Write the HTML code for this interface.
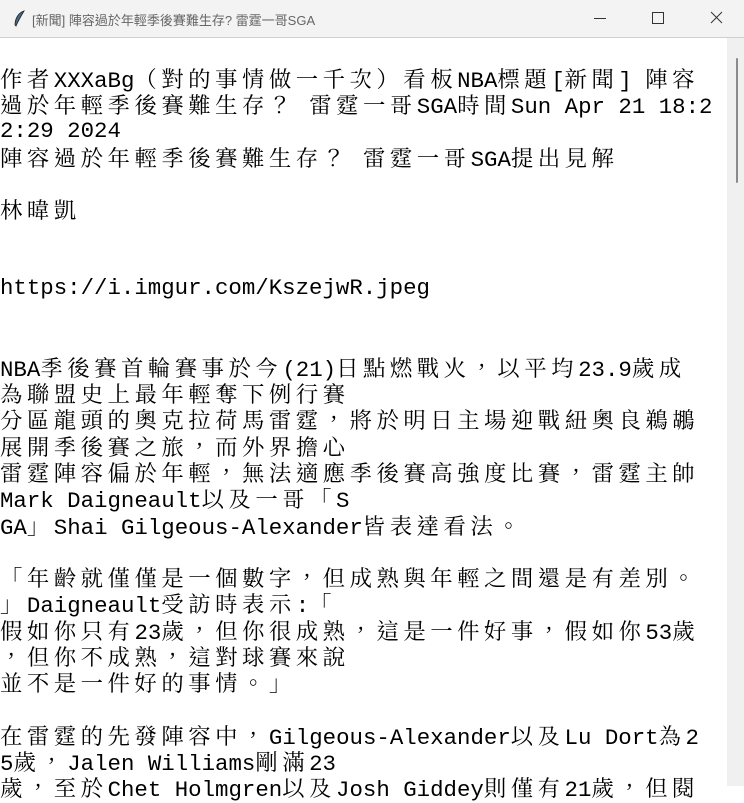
<!DOCTYPE html>
<html><head><meta charset="utf-8"><style>
html,body{margin:0;padding:0;width:744px;height:786px;overflow:hidden;background:#fff}
.tb{position:absolute;left:0;top:0;width:744px;height:37px;background:#f3f3f3;border-bottom:1px solid #cfcfcf;font-family:"Liberation Sans","Noto Sans CJK TC",sans-serif;font-size:13px;color:#666}
.tb .t{position:absolute;left:32px;top:10px}
.tb .ic{position:absolute;left:12px;top:10px}
.sb{position:absolute;left:727px;top:38px;width:17px;height:748px;background:#f0f0f0}
.th{position:absolute;left:736px;top:58px;width:2px;height:125px;background:#8a8a8a;border-radius:1px}
.txt{position:absolute;left:0;top:65px;width:727px;font-family:"Liberation Mono",monospace;font-size:22.4px;line-height:26.28px;color:#000}
.txt div{height:26.28px;white-space:pre}
i{font-style:normal;letter-spacing:4.5px;font-family:"Noto Serif CJK TC","Noto Serif CJK SC",serif}
</style></head><body>
<div class="tb">
<svg class="ic" width="14" height="18" viewBox="0 0 14 18"><path d="M12 1 C6 3 3 9 3 15 L4 16 C6 11 9 6 12 1Z" fill="#4a6a8a" stroke="#222" stroke-width="0.8"/></svg>
<span class="t">[新聞] 陣容過於年輕季後賽難生存? 雷霆一哥SGA</span>
<svg style="position:absolute;left:0;top:0" width="744" height="37" viewBox="0 0 744 37">
<line x1="594" y1="18.5" x2="606" y2="18.5" stroke="#333" stroke-width="1"/>
<rect x="652.5" y="12.5" width="11" height="11" fill="none" stroke="#333"/>
<path d="M711 12 L722 23 M722 12 L711 23" stroke="#333" stroke-width="1"/>
</svg>
</div>
<div class="sb"></div><div class="th"></div>
<div class="txt"><div><i>作者</i>XXXaBg<i>（對的事情做一千次）看板</i>NBA<i>標題</i>[<i>新聞</i>] <i>陣容</i></div><div><i>過於年輕季後賽難生存？</i> <i>雷霆一哥</i>SGA<i>時間</i>Sun Apr 21 18:2</div><div>2:29 2024</div><div><i>陣容過於年輕季後賽難生存？</i> <i>雷霆一哥</i>SGA<i>提出見解</i></div><div></div><div><i>林暐凱</i></div><div></div><div></div><div>https://i.imgur.com/KszejwR.jpeg</div><div></div><div></div><div>NBA<i>季後賽首輪賽事於今</i>(21)<i>日點燃戰火，以平均</i>23.9<i>歲成</i></div><div><i>為聯盟史上最年輕奪下例行賽</i></div><div><i>分區龍頭的奧克拉荷馬雷霆，將於明日主場迎戰紐奧良鵜鶘</i></div><div><i>展開季後賽之旅，而外界擔心</i></div><div><i>雷霆陣容偏於年輕，無法適應季後賽高強度比賽，雷霆主帥</i></div><div>Mark Daigneault<i>以及一哥「</i>S</div><div>GA<i>」</i>Shai Gilgeous-Alexander<i>皆表達看法。</i></div><div></div><div><i>「年齡就僅僅是一個數字，但成熟與年輕之間還是有差別。</i></div><div><i>」</i>Daigneault<i>受訪時表示</i>:<i>「</i></div><div><i>假如你只有</i>23<i>歲，但你很成熟，這是一件好事，假如你</i>53<i>歲</i></div><div><i>，但你不成熟，這對球賽來說</i></div><div><i>並不是一件好的事情。」</i></div><div></div><div><i>在雷霆的先發陣容中，</i>Gilgeous-Alexander<i>以及</i>Lu Dort<i>為</i>2</div><div>5<i>歲，</i>Jalen Williams<i>剛滿</i>23</div><div><i>歲，至於</i>Chet Holmgren<i>以及</i>Josh Giddey<i>則僅有</i>21<i>歲，但閱</i></div></div>
</body></html>
